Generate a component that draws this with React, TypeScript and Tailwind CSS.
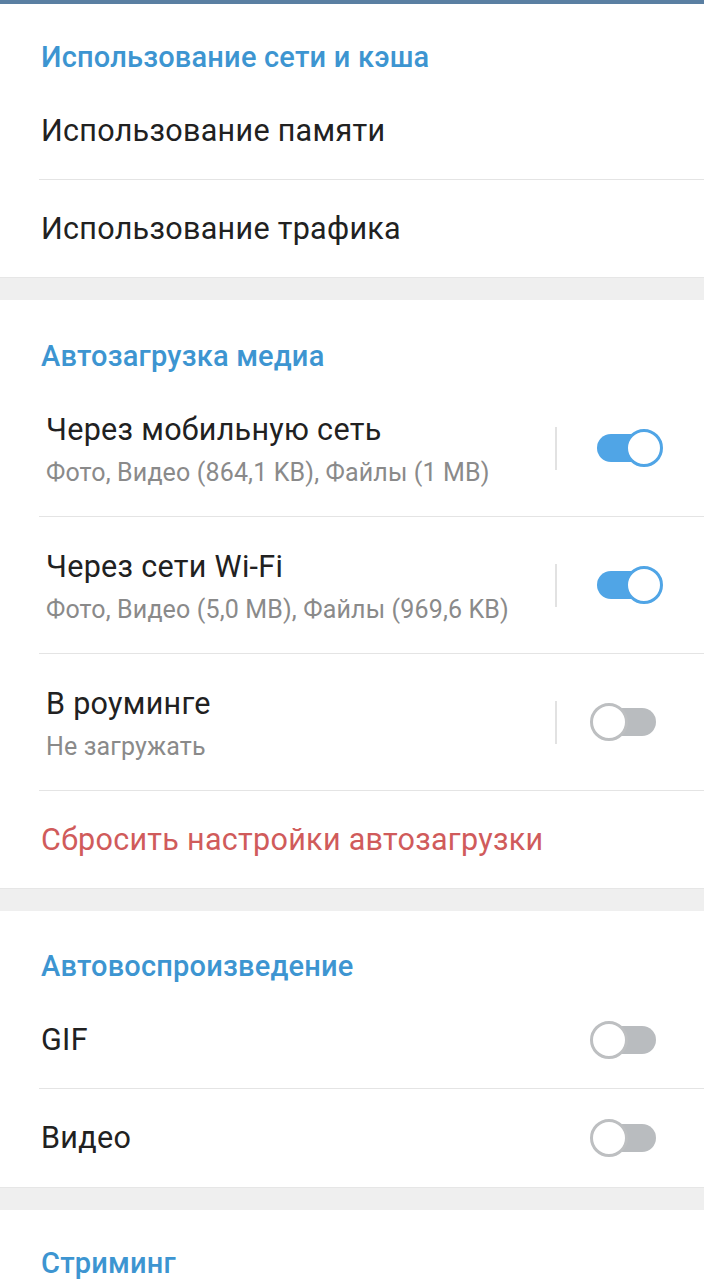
import React from "react";

function Toggle({ on }: { on: boolean }) {
  return (
    <div className="relative w-[73px] h-[38px] shrink-0">
      <div
        className={
          on
            ? "absolute left-[7px] right-[7px] top-[5px] h-[28px] rounded-full bg-[#50a5e6]"
            : "absolute left-[7px] right-[7px] top-[5px] h-[28px] rounded-full bg-[#b9bcbf]"
        }
      />
      <div
        className={
          on
            ? "absolute right-0 top-0 w-[38px] h-[38px] rounded-full bg-white border-[3px] border-[#50a5e6]"
            : "absolute left-0 top-0 w-[38px] h-[38px] rounded-full bg-white border-[3px] border-[#bdbfc1]"
        }
      />
    </div>
  );
}

function Header({ children, top = "pt-[38px]" }: { children: React.ReactNode; top?: string }) {
  return (
    <div className={"h-[80px] pl-[41px] " + top}>
      <div className="text-[29px] tracking-[0.2px] leading-[34px] font-medium text-[#3d95d1]">{children}</div>
    </div>
  );
}

function Divider() {
  return <div className="h-px ml-[39px] bg-[#e4e4e4]" />;
}

function SimpleRow({
  label,
  toggle,
  color,
  h = "h-[96px]",
}: {
  label: string;
  toggle?: boolean;
  color?: string;
  h?: string;
}) {
  return (
    <div className={h + " flex items-center pl-[41px] pr-[41px]"}>
      <div className={"flex-1 text-[30.5px] tracking-[0.3px] leading-[36px] " + (color ?? "text-[#212121]")}>
        {label}
      </div>
      {toggle !== undefined && <Toggle on={toggle} />}
    </div>
  );
}

function DoubleRow({ title, sub, on }: { title: string; sub: string; on: boolean }) {
  return (
    <div className="h-[136px] flex items-center pl-[46px] pr-[41px]">
      <div className="flex-1 self-stretch">
        <div className="mt-[32px] text-[30.5px] tracking-[0.3px] leading-[36px] text-[#212121]">{title}</div>
        <div className="mt-[10px] text-[25px] tracking-[0.15px] leading-[30px] text-[#8a8a8a]">{sub}</div>
      </div>
      <div className="w-[2px] h-[43px] bg-[#e2e2e2] mr-[33px]" />
      <Toggle on={on} />
    </div>
  );
}

function Gap() {
  return <div className="h-[23px] bg-[#efefef] border-t border-[#e6e6e6]" />;
}

export default function App() {
  return (
    <div
      className="w-[704px] h-[1279px] overflow-hidden bg-white"
      style={{ fontFamily: "Roboto, 'Noto Sans', sans-serif" }}
    >
      <div className="h-[4px] bg-[#5a7fa2] shadow-[0_1px_3px_rgba(90,127,162,0.35)]" />
      <div className="bg-white">
        <div className="h-[79px] pl-[41px] pt-[36px]">
          <div className="text-[29px] tracking-[0.2px] leading-[34px] font-medium text-[#3d95d1]">
            Использование сети и кэша
          </div>
        </div>
        <SimpleRow label="Использование памяти" />
        <Divider />
        <SimpleRow label="Использование трафика" h="h-[97px]" />
      </div>
      <Gap />
      <div className="bg-white">
        <Header top="pt-[39px]">Автозагрузка медиа</Header>
        <DoubleRow title="Через мобильную сеть" sub="Фото, Видео (864,1 KB), Файлы (1 MB)" on={true} />
        <Divider />
        <DoubleRow title="Через сети Wi-Fi" sub="Фото, Видео (5,0 MB), Файлы (969,6 KB)" on={true} />
        <Divider />
        <DoubleRow title="В роуминге" sub="Не загружать" on={false} />
        <Divider />
        <SimpleRow label="Сбросить настройки автозагрузки" color="text-[#d05b5b]" h="h-[97px]" />
      </div>
      <Gap />
      <div className="bg-white">
        <Header>Автовоспроизведение</Header>
        <SimpleRow label="GIF" toggle={false} h="h-[97px]" />
        <Divider />
        <SimpleRow label="Видео" toggle={false} h="h-[98px]" />
      </div>
      <Gap />
      <div className="bg-white">
        <Header top="pt-[36px]">Стриминг</Header>
      </div>
    </div>
  );
}
